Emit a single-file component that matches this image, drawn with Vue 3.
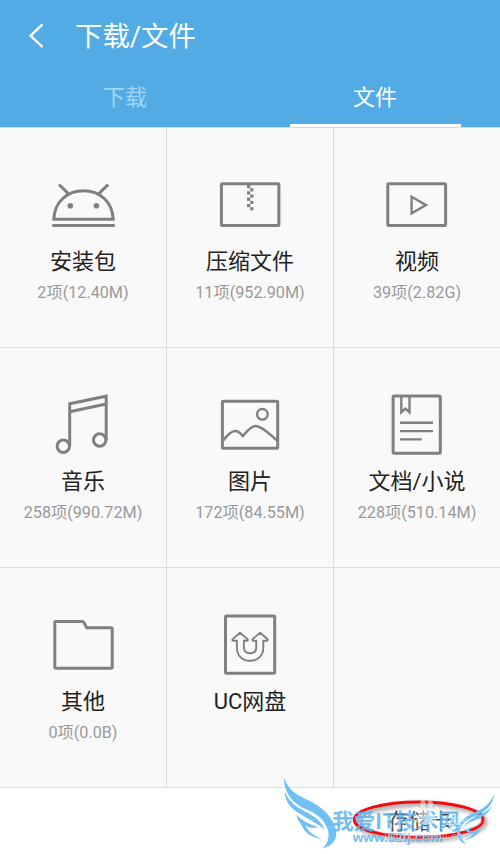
<script setup>
const tabs = [
  { label: '下载', active: false },
  { label: '文件', active: true },
]

const zipTeeth = [0, 1, 2, 3]

const categories = [
  { icon: 'apk', name: '安装包', count: '2项(12.40M)' },
  { icon: 'zip', name: '压缩文件', count: '11项(952.90M)' },
  { icon: 'video', name: '视频', count: '39项(2.82G)' },
  { icon: 'music', name: '音乐', count: '258项(990.72M)' },
  { icon: 'image', name: '图片', count: '172项(84.55M)' },
  { icon: 'doc', name: '文档/小说', count: '228项(510.14M)' },
  { icon: 'folder', name: '其他', count: '0项(0.0B)' },
  { icon: 'cloud', name: 'UC网盘', count: '' },
  { icon: '', name: '', count: '' },
]
</script>

<template>
  <div class="screen">
    <header class="header">
      <div class="title-bar">
        <svg class="back" viewBox="0 0 18 28" aria-hidden="true">
          <path d="M15.5 2.5L3.5 13.7L15.5 25" />
        </svg>
        <h1 class="title">下载/文件</h1>
      </div>
      <nav class="tabs">
        <div v-for="tab in tabs" :key="tab.label" class="tab" :class="{ active: tab.active }">
          <span>{{ tab.label }}</span>
        </div>
      </nav>
    </header>

    <main class="grid">
      <section v-for="(item, i) in categories" :key="i" class="cell">
        <svg class="icon" viewBox="0 0 80 64" aria-hidden="true">
          <g v-if="item.icon === 'apk'">
            <path d="M10.8 47.2C11.5 30 24 18.7 40.5 18.7S69.5 30 70.2 47.2Z" />
            <path d="M9.3 53.4H71.8M16 12.5L25.6 21.8M65.2 12.5L55.6 21.8" />
            <circle class="solid" cx="27.3" cy="33.7" r="2.8" />
            <circle class="solid" cx="53.4" cy="33.7" r="2.8" />
          </g>
          <g v-else-if="item.icon === 'zip'">
            <rect x="11.4" y="11.8" width="57.5" height="41.8" rx="1" />
            <template v-for="n in zipTeeth" :key="n">
              <rect class="solid" x="37" :y="13 + n * 6.33" width="3.2" height="3.2" />
              <rect class="solid" x="40.2" :y="16.2 + n * 6.33" width="3.2" height="3.2" />
            </template>
          </g>
          <g v-else-if="item.icon === 'video'">
            <rect x="10.8" y="11.8" width="57.8" height="41.8" rx="1" />
            <path class="thin" d="M34.6 24.8V41.4L49 33.1Z" />
          </g>
          <g v-else-if="item.icon === 'music'">
            <circle cx="20.3" cy="54.3" r="6.2" />
            <circle cx="56.7" cy="48" r="6.2" />
            <path d="M26.7 54.5V11.8L63.2 4.2V48.2M26.7 19.8L63.2 12" />
          </g>
          <g v-else-if="item.icon === 'image'">
            <rect x="12.4" y="9.3" width="55.3" height="47" rx="1" />
            <circle class="thin" cx="52.4" cy="22.3" r="5.3" />
            <path class="thin" d="M13 48.8C18 42 22 39 25.5 39C28.8 39 30.5 41.5 32.7 44C35.5 41.5 40 34 45.8 34C52 34 60 42.5 67 48.5" />
          </g>
          <g v-else-if="item.icon === 'doc'">
            <rect x="16.1" y="4.1" width="47.2" height="57.2" rx="1" />
            <path class="thin" d="M24.3 4V20.2L28.4 16.5L32.5 20.2V4M23 30.8H56M23 39.1H56M23 47.4H44.7" />
          </g>
          <g v-else-if="item.icon === 'folder'">
            <path d="M13 9.4H39.2C41.6 9.4 42 13.5 43.8 15.7H68Q69.2 15.7 69.2 17V55Q69.2 56.3 68 56.3H13Q11.8 56.3 11.8 55V10.6Q11.8 9.4 13 9.4Z" />
          </g>
          <g v-else-if="item.icon === 'cloud'">
            <rect x="15.5" y="4.1" width="49.2" height="57.2" rx="1" />
            <path class="fine" d="M30 20.7L22.5 27.2Q22 28.5 23.2 28.7H26.9V35.5C26.9 43.5 32 48.8 40 48.8S53.3 43.5 53.3 35.5V28.7H57Q58.2 28.5 57.6 27.2L50.2 20.7L42.4 27.2Q42 28.5 43.2 28.7H46.2V35.5C46.2 39.2 43.6 41.2 40 41.2S33.9 39.2 33.9 35.5V28.7H37Q38.2 28.5 37.7 27.2Z" />
          </g>
        </svg>
        <div class="name">{{ item.name }}</div>
        <div class="count">{{ item.count }}</div>
      </section>
    </main>

    <footer class="footer">
      <span class="storage">存储卡</span>
      <svg class="mark" viewBox="0 0 690 267">
        <defs>
          <filter id="soft" x="-10%" y="-30%" width="120%" height="170%">
            <feGaussianBlur stdDeviation="6" />
          </filter>
        </defs>
        <ellipse class="ring-shadow" cx="453" cy="171" rx="192" ry="53" filter="url(#soft)" />
        <ellipse class="ring" cx="446" cy="164" rx="193" ry="53" />
        <g class="wing">
          <path d="M41 38C60 80 82 90 112 104C158 126 188 154 198 196C203 223 187 244 158 250C176 232 181 209 170 185C157 157 135 145 108 133C70 117 44 88 41 38Z" />
          <path d="M44 78C55 110 79 126 107 140C139 156 157 174 164 195C142 174 116 165 93 148C65 133 44 112 44 78Z" />
          <path d="M79 149C96 166 120 179 146 187C130 190 115 187 106 182C116 201 133 214 158 222C128 219 105 205 96 182C88 172 82 163 79 149Z" />
          <path d="M673 88C665 132 638 143 607 157C580 170 568 186 571 207C574 220 580 230 588 238C567 230 557 211 562 191C568 166 588 153 613 143C646 129 660 114 673 88Z" />
          <path d="M668 119C657 145 637 157 609 168C590 176 580 186 576 196C583 174 602 163 625 150C645 142 659 134 668 119Z" />
          <path d="M646 160C633 181 613 189 591 193C603 201 619 201 631 193C623 212 602 224 583 225C607 214 610 207 610 204C597 205 588 201 583 193C608 187 631 181 646 160Z" />
        </g>
        <text class="site" x="187" y="193" textLength="382" lengthAdjust="spacingAndGlyphs">我爱IT技术网</text>
        <text class="url" x="248" y="231" textLength="270" lengthAdjust="spacingAndGlyphs">www.52ij.com</text>
        <g class="paw">
          <ellipse cx="439" cy="133" rx="7" ry="10" />
          <ellipse cx="459" cy="117" rx="8" ry="11" />
          <ellipse cx="481" cy="117" rx="8" ry="11" />
          <ellipse cx="499" cy="133" rx="7" ry="10" />
          <path d="M469 134C482 134 486 146 497 156C507 170 494 181 469 176C444 181 432 170 442 156C453 146 456 134 469 134Z" />
          <text class="baidu" x="342" y="191">Baidu</text>
          <text class="baidu" x="512" y="191" textLength="88">经验</text>
          <text class="baidu-url" x="343" y="221" textLength="260">jingyan.baidu.com</text>
        </g>
      </svg>
    </footer>
  </div>
</template>

<style>
body {
  margin: 0;
  background: #fff;
}
</style>

<style scoped>
.screen {
  display: flex;
  flex-direction: column;
  width: 500px;
  height: 854px;
  overflow: hidden;
  background: #fff;
  font-family: Roboto, "Noto Sans CJK SC", sans-serif;
}
.header {
  display: flex;
  flex-direction: column;
  height: 127px;
  background: #52abe5;
  border-bottom: 1px solid #d9dadb;
}
.title-bar {
  display: flex;
  align-items: center;
  box-sizing: border-box;
  height: 71px;
  padding: 1px 0 0 27px;
}
.back {
  width: 18px;
  height: 28px;
  margin-top: -1px;
  fill: none;
  stroke: #fff;
  stroke-width: 2.4;
}
.title {
  margin: 1px 0 0 30px;
  color: #fff;
  font-size: 27.4px;
  font-weight: 400;
  line-height: 40px;
}
.tabs {
  display: flex;
  height: 56px;
}
.tab {
  display: flex;
  flex: 1;
  flex-direction: column;
  align-items: center;
  color: #a2d6f6;
  font-size: 22px;
  line-height: 53px;
}
.tab.active {
  color: #fff;
}
.tab.active::after {
  width: 171px;
  height: 3px;
  background: #fff;
  content: "";
}
.grid {
  display: grid;
  grid-template-columns: 167px 167px 166px;
  grid-auto-rows: 220px;
  background: #f9f9f9;
}
.cell {
  display: flex;
  flex-direction: column;
  align-items: center;
  box-sizing: border-box;
  padding-top: 44px;
  border-right: 1px solid #dcdcdc;
  border-bottom: 1px solid #dcdcdc;
}
.cell:nth-child(3n) {
  border-right: 0;
}
.icon {
  width: 80px;
  height: 64px;
  flex: none;
  fill: none;
  stroke: #808080;
  stroke-width: 3;
}
.icon .thin {
  stroke-width: 2.4;
}
.icon .fine {
  stroke-width: 1.9;
}
.icon .solid {
  fill: #808080;
  stroke: none;
}
.name {
  height: 32px;
  margin-top: 10px;
  color: #222;
  font-size: 22px;
  line-height: 32px;
}
.count {
  margin-top: 3px;
  color: #999;
  font-size: 16.2px;
  line-height: 24px;
}
.footer {
  position: relative;
  display: flex;
  flex: 1;
  align-items: center;
  justify-content: flex-end;
  padding: 2px 48px 0 0;
}
.storage {
  color: #444;
  font-size: 21.5px;
  line-height: 32px;
}
.mark {
  position: absolute;
  right: 0;
  bottom: 0;
  width: 230px;
  height: 89px;
}
.wing {
  fill: #6fc0f5;
}
.site {
  fill: #5ab3ee;
  fill-opacity: 0.85;
  font-size: 64px;
  font-weight: 700;
  font-family: "Noto Sans CJK SC", sans-serif;
}
.url {
  fill: #62b5ee;
  fill-opacity: 0.9;
  font-size: 37px;
  font-weight: 700;
  font-family: "Liberation Sans", sans-serif;
}
.ring {
  fill: none;
  stroke: #f20a0f;
  stroke-width: 9;
}
.ring-shadow {
  fill: none;
  stroke: #000;
  stroke-opacity: 0.5;
  stroke-width: 10;
}
.paw {
  fill: #fff;
  fill-opacity: 0.5;
}
.baidu {
  font-size: 44px;
  font-weight: 400;
}
.baidu-url {
  font-size: 28px;
}
</style>
